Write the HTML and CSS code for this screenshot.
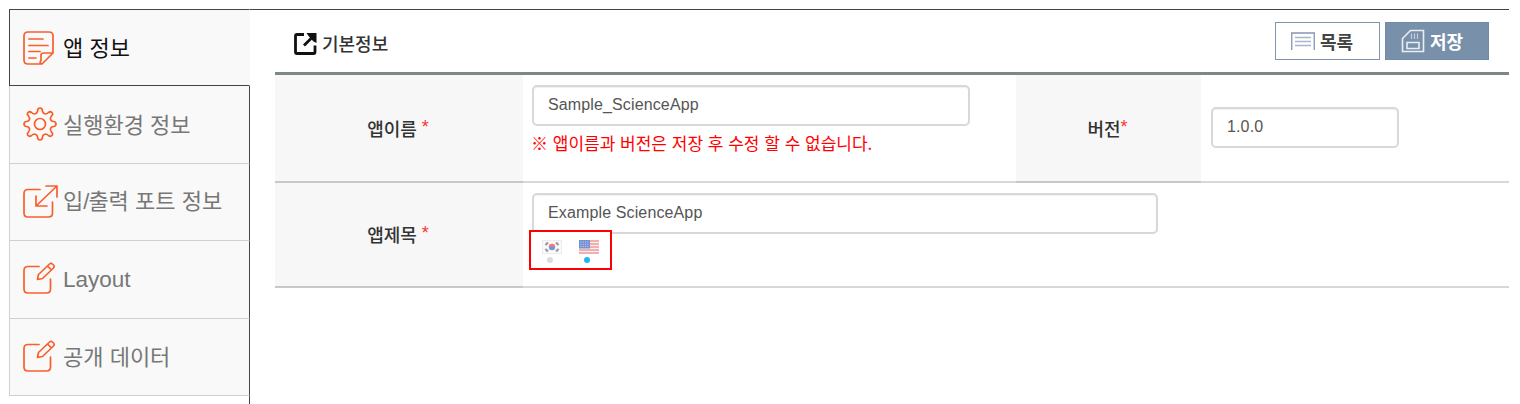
FILE: index.html
```html
<!DOCTYPE html>
<html lang="ko">
<head>
<meta charset="utf-8">
<title>앱 정보</title>
<link rel="stylesheet" href="styles.css">
</head>
<body>
<div class="app">
  <nav class="sidebar">
    <a class="tab tab-active">
      <svg class="tab-icon" viewBox="0 0 36 36"><path d="M19 34H6Q2 34 2 30V6Q2 2 6 2H27Q31 2 31 6V23L20 34Q17 34 19 30V25Q19 23 22 23H31M7 9H21M7 15.500H26M7 21.500H18M7 28H14"/></svg>
      <span>앱 정보</span>
    </a>
    <a class="tab">
      <svg class="tab-icon" viewBox="0 0 36 36"><circle cx="18" cy="18" r="5.500"/><path d="M15.500 5.500Q15.500 2 18 2T20.500 5.500Q21 7.500 23.500 8Q25 8 26.500 6.500Q28.500 5 30 6.500T29.500 10Q28 12 28.500 13.500Q29.500 15.500 31.500 15.500Q34 15.800 34 18T31.500 20.500Q29.500 20.500 28.500 22.500Q28 24 29.500 26Q31.500 28 30 29.500T26.500 29.500Q25 28 23.500 28Q21 28.500 20.500 30.500Q20.500 34 18 34T15.500 30.500Q15 28.500 12.500 28Q11 28 9.500 29.500Q7.500 31 6 29.500T6.500 26Q8 24 7.500 22.500Q6.500 20.500 4.500 20.500Q2 20.200 2 18T4.500 15.500Q6.500 15.500 7.500 13.500Q8 12 6.500 10Q4.500 8 6 6.500T9.500 6.500Q11 8 12.500 8Q15 7.500 15.500 5.500Z"/></svg>
      <span>실행환경 정보</span>
    </a>
    <a class="tab">
      <svg class="tab-icon" viewBox="0 0 36 36"><path d="M18 5.500H6Q2 5.500 2 9.500V29Q2 33 6 33H26.500Q30.500 33 30.500 29V18M24 2H35V13M35 2L14 22M14 12V22H25"/></svg>
      <span>입<b class="slash">/</b>출력 포트 정보</span>
    </a>
    <a class="tab">
      <svg class="tab-icon" viewBox="0 0 36 36"><path d="M17 5.500H6Q2 5.500 2 9.500V28Q2 32 6 32H24.500Q28.500 32 28.500 28V18M15.500 18.500L16.500 13.500L27.500 3Q29 1.500 31 3.500T31.500 7L20.500 17.500ZM25.500 5L29.500 9"/></svg>
      <span class="latin">Layout</span>
    </a>
    <a class="tab">
      <svg class="tab-icon" viewBox="0 0 36 36"><path d="M17 5.500H6Q2 5.500 2 9.500V28Q2 32 6 32H24.500Q28.500 32 28.500 28V18M15.500 18.500L16.500 13.500L27.500 3Q29 1.500 31 3.500T31.500 7L20.500 17.500ZM25.500 5L29.500 9"/></svg>
      <span>공개 데이터</span>
    </a>
    <div class="sidebar-rest"></div>
  </nav>
  <main class="content">
    <header class="head">
      <h1 class="title">
        <svg class="title-icon" viewBox="0 0 24 24"><path d="M11 2.500H4Q2.500 2.500 2.500 4V20Q2.500 21.500 4 21.500H20.500Q22 21.500 22 20V13.500M11 13.500L20 4.500" fill="none" stroke="#111" stroke-width="2.800"/><path d="M13.500 1H23.500V11L20.500 9.500L15.500 4Z" fill="#111"/></svg>
        <span>기본정보</span>
      </h1>
      <div class="actions">
        <button class="btn btn-list">
          <svg class="list-icon" viewBox="0 0 24 19"><path d="M.75 18V1H23.250V18" fill="none" stroke="#8396b1" stroke-width="1.300"/><path d="M4 5.500H20M4 9.500H20M4 13.500H20" fill="none" stroke="#a9b5c8" stroke-width="1.500"/></svg>
          <span>목록</span>
        </button>
        <button class="btn btn-save">
          <svg class="save-icon" viewBox="0 0 24 24"><path d="M1.500 22.500V9.500L9.500 1.500H22.500V22.500ZM6 13.500H18V19.500H6Z" fill="none" stroke="#e8eef4" stroke-width="1.600"/><path d="M10.500 4.500V10M13.500 4.500V10M16.500 4.500V10" stroke="#c3cfdb" stroke-width="1.200"/></svg>
          <span>저장</span>
        </button>
      </div>
    </header>
    <section class="form">
      <div class="row row-name">
        <div class="label"><span>앱이름 <em class="req">*</em></span></div>
        <div class="field">
          <input class="input" value="Sample_ScienceApp">
          <p class="note">※ 앱이름과 버전은 저장 후 수정 할 수 없습니다.</p>
        </div>
        <div class="label"><span>버전<em class="req">*</em></span></div>
        <div class="field field-version"><input class="input input-version" value="1.0.0"></div>
      </div>
      <div class="row row-title">
        <div class="label"><span>앱제목 <em class="req">*</em></span></div>
        <div class="field">
          <input class="input input-title" value="Example ScienceApp">
          <div class="langs">
            <div class="lang">
              <svg class="flag" viewBox="0 0 20 14"><rect x=".5" y=".5" width="19" height="13" fill="#fafafa" stroke="#ececec"/><path d="M6.800 7A3.200 3.200 0 0 1 13.200 7Z" fill="#ee7776"/><path d="M6.800 7A3.200 3.200 0 0 0 13.200 7Z" fill="#6799e2"/><path d="M3.500 5L6 2.500M14 2.500L16.500 5M3.500 9L6 11.500M14 11.500L16.500 9" stroke="#999" stroke-width="2.200"/></svg>
              <i class="dot"></i>
            </div>
            <div class="lang">
              <svg class="flag" viewBox="0 0 20 14"><rect width="20" height="14" fill="#f9eded"/><path d="M0 1H20M0 4H20M0 7H20M0 10H20M0 13H20" stroke="#ee9d9b" stroke-width="1.500"/><rect width="11" height="8.500" fill="#7391d3"/><path d="M1.500 2H10M1.500 4.300H10M1.500 6.500H10" stroke="#c5d5ef" stroke-width="1" stroke-dasharray="1 1.300"/></svg>
              <i class="dot dot-on"></i>
            </div>
          </div>
        </div>
      </div>
    </section>
  </main>
</div>
</body>
</html>
```
FILE: styles.css
```css
* { box-sizing: border-box; }
body { margin: 0; background: #fff; font-family: "Liberation Sans", "Noto Sans CJK KR", sans-serif; overflow: hidden; }
.app { display: flex; height: 404px; padding: 9px 11px 0 9px; }
.sidebar { display: flex; flex-direction: column; width: 241px; }
.tab { display: flex; align-items: center; height: 77.500px; padding: 0 0 0 12px; gap: 6px; background: #f9f9f9; border: 1px solid #d0d0d0; border-top: 0; border-right: 1px solid #444; color: #777; font: 22px/30px "Noto Sans CJK KR", sans-serif; white-space: nowrap; }
.tab span { padding-bottom: 3px; }
.tab-active { height: 77px; border: 1px solid #444; border-right-color: #f9f9f9; color: #111; }
.tab-icon { width: 36px; height: 36px; flex: none; margin-right: -1px; fill: none; stroke: #f95f2b; stroke-width: 1.700; stroke-linejoin: round; stroke-linecap: round; }
.tab .latin { padding: 2px 0 0; font: 22.500px/30px "Liberation Sans", sans-serif; }
.slash { margin-right: -1px; font: 22px/30px "Liberation Sans", sans-serif; }
.sidebar-rest { flex: 1; border-right: 1px solid #444; }
.content { flex: 1; min-width: 0; border-top: 1px solid #444; padding-left: 25px; }
.head { display: flex; justify-content: space-between; height: 65px; padding: 12px 20px 0 18px; border-bottom: 3px solid #7c8888; }
.title { display: flex; align-items: center; gap: 5px; height: 43px; margin: 0; color: #333; font: 500 18px/24px "Noto Sans CJK KR", sans-serif; }
.title span { padding-bottom: 2px; }
.title-icon { width: 24px; height: 24px; }
.actions { display: flex; gap: 5px; }
.btn { display: flex; align-items: center; width: 105px; height: 38px; padding: 0 0 0 15px; border: 1px solid #8094b4; background: #fff; color: #444; font: 700 18px/24px "Noto Sans CJK KR", sans-serif; gap: 5px; }
.btn span { padding-bottom: 1px; }
.btn-save { width: 104px; background: #7990aa; border-color: #728aa8; color: #fff; gap: 5px; }
.list-icon { width: 24px; height: 19px; }
.save-icon { width: 24px; height: 24px; }
.row { display: grid; }
.row-name { grid-template-columns: 248px 493px 185px 1fr; height: 108px; }
.row-title { grid-template-columns: 248px 1fr; height: 105px; }
.label { display: flex; align-items: center; justify-content: center; padding: 0 2px 1px 0; border-bottom: 2px solid #c8c8c8; background: #f7f7f7; color: #333; font: 500 18px/26px "Noto Sans CJK KR", sans-serif; }
.req { color: #f33; font: 18px/20px "Liberation Sans", sans-serif; vertical-align: 3px; }
.field { padding: 10px 9px 0; border-bottom: 2px solid #d8d8d8; }
.field-version { padding: 32px 0 0 10px; }
.input { display: block; width: 438px; height: 41px; padding: 0 14px 2px; border: 2px solid #d8d8d8; border-radius: 5px; background: #fff; box-shadow: inset 0 1px 1px #f0f0f0; color: #555; font: 16px "Liberation Sans", sans-serif; letter-spacing: .13px; }
.input-version { width: 188px; }
.input-title { width: 626px; }
.note { margin: 4px 0 0 -1px; color: #f00; font: 17px/26px "Noto Sans CJK KR", sans-serif; white-space: nowrap; }
.langs { position: relative; display: flex; gap: 17px; width: 83px; height: 40px; margin: -4px 0 0 -3px; padding: 8px 0 0 11px; background: #fff; border: 2px solid #f00; }
.lang { display: flex; flex-direction: column; gap: 3px; width: 20px; }
.flag { width: 20px; height: 14px; }
.dot { width: 6px; height: 6px; margin-left: 5px; border-radius: 50%; background: #dcdcdc; }
.dot-on { background: #20b8f4; }
```
